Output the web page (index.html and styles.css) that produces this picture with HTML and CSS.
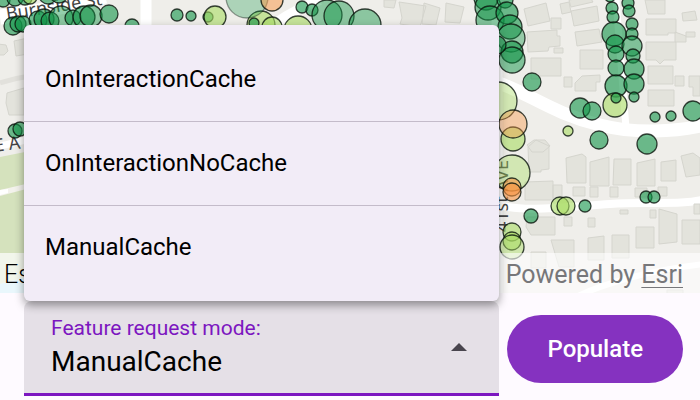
FILE: index.html
```html
<!DOCTYPE html>
<html lang="en">
<head>
<meta charset="utf-8">
<title>Tree map</title>
<link rel="stylesheet" href="styles.css">
</head>
<body>
<main class="app">
  <section class="map" aria-label="Street tree map">
    <svg class="map-canvas" viewBox="0 0 700 293" preserveAspectRatio="xMinYMin slice" aria-hidden="true">
      <rect width="700" height="293" fill="#efeeea"/>
      <!-- parks and water -->
      <path d="M0 157L30 151V253H0z" fill="#d5e2bd"/>
      <path d="M0 190L30 183V188L0 196z" fill="#f3f2ec"/>
      <path d="M0 190L8 189V193L0 195z" fill="#fff"/>
      <path d="M0 253H30V276L0 284z" fill="#dfe8cc"/>
      <path d="M0 284L30 276V293H0z" fill="#c8ebf8"/>
      <!-- roads -->
      <g fill="none" stroke="#fff">
        <path d="M0 17C30 13 70 6 105 -4" stroke-width="15"/>
        <path d="M146 0V30M497 20V293" stroke-width="11"/>
        <path d="M616 0L626 128" stroke-width="7"/>
        <path d="M490 80C525 90 550 113 600 125C635 134 675 132 705 125" stroke-width="13"/>
        <path d="M496 204C520 213 565 207 610 204C650 201 680 206 705 199" stroke-width="8"/>
        <path d="M570 300C600 284 650 270 705 264" stroke-width="6"/>
        <path d="M270 28Q285 14 320 0" stroke-width="10"/>
        <path d="M0 146L30 139" stroke-width="7"/>
      </g>
      <path d="M0 83Q15 78 30 76" fill="none" stroke="#e2e1dc" stroke-width="5"/>
      <!-- buildings -->
      <g fill="#e3e3dc" stroke="#d5d5ce">
        <path d="M-2 44l8 1 2 6-4 4H-2zM14 41l14-3v16l-12 2zM7 93l17-5v27H9l-3-12z"/>
        <path d="M384 0l12 0-2 8-10-1zM399 2l27 4-6 21-20-3 2-6zM424 3l16 5-4 17-14-1zM446 3l18 4-4 16-15-1z"/>
        <path d="M524 9l22-6 4 18-22 5zM560 4l9-2 2 10-9 2zM569 0l21-3 3 5-22 5zM571 11l26-5 2 15-25 5zM551 18h10v11h-10zM527 32l30-2v6h3v10l-11 1-1 4-20 1zM554 48h9v5h-9zM575 32l24-3 3 13-25 4zM580 50h23v19h-23zM531 58h30v18h-21v3h-9zM564 77h8v10h-8zM575 83l7-7 18-1v7h-4v9h-21zM645 0h20v14h-17zM682 13l13-2 2 9-14 1zM646 19h30v14h-8v2h-22zM675 32l11 4v6h-11zM686 32h9v5h-9zM646 42h30v18h-12l-4 4-4-4h-10zM648 66h25v18h-25zM675 76h9v10h-9zM689 76h11v20h-7v-9h-4zM648 90h26v16h-26z"/>
        <path d="M527 145l7-5h11l5 6-7 6h-11zM528 147l8-7 13 6v23l-8 1v2h-12zM566 158l16-4 4 3v26h-19zM590 162l19-5v29h-19zM614 159h17v26h-18zM637 163l18-4v27h-18zM661 162l15-2v21h-15zM681 156l12-3 7 5v17l-14 2zM525 182l28-1v19h-28zM553 185h9v13h-9zM573 187h12v9h-12zM590 187h8v10h-8zM610 187h8v10h-8zM635 188h12v9h-12zM658 187h9v9h-9zM527 217h28v18h-24l-5-8zM564 217h8v9h-8zM588 218h7v9h-7zM620 210h8v4h-8zM650 210h6v8h-6zM694 204h6v10h-6zM659 209l18 5v28l-18 2zM636 227h18v21h-18zM682 220h18v24h-18zM612 235h17v23h-17zM588 238l16-2v24h-16zM551 240h23v27h-15zM531 252h15v16h-15zM667 290h16v5h-16z"/>
      </g>
      <!-- street names -->
      <g class="street">
        <text transform="translate(7 20) rotate(-9)">Burnside St</text>
        <text transform="translate(-5 152) rotate(-8)">E A</text>
        <text transform="translate(508 232) rotate(-90)">41st AVE</text>
      </g>
      <!-- trees -->
      <g stroke="#0a140c" stroke-opacity=".8" stroke-width="1.3" fill="#119447" fill-opacity=".6">
        <g>
          <circle cx="13" cy="26" r="9"/><circle cx="18" cy="24" r="8"/><circle cx="23" cy="24" r="8"/><circle cx="3" cy="0" r="7"/><circle cx="15" cy="-2" r="8"/><circle cx="25" cy="-2" r="7"/><circle cx="38" cy="20" r="9"/><circle cx="44" cy="19" r="10"/><circle cx="50" cy="21" r="9"/><circle cx="61" cy="18" r="12" fill-opacity=".45"/><circle cx="73" cy="18" r="8"/><circle cx="84" cy="17" r="11"/><circle cx="91" cy="16" r="11" fill-opacity=".45"/><circle cx="109" cy="14" r="9"/><circle cx="132" cy="26" r="7"/><circle cx="48" cy="-5" r="9"/><circle cx="59" cy="-6" r="9"/>
          <circle cx="177" cy="15" r="6"/><circle cx="191" cy="16" r="5"/><circle cx="208" cy="17" r="5"/><circle cx="302" cy="7" r="6"/><circle cx="312" cy="10" r="6"/><circle cx="327" cy="15" r="15" fill-opacity=".45"/><circle cx="339" cy="16" r="15" fill-opacity=".45"/><circle cx="365" cy="25" r="16" fill-opacity=".45"/>
          <circle cx="15" cy="131" r="7"/><circle cx="20" cy="129" r="7"/>
        </g>
        <g>
          <circle cx="486" cy="-2" r="12"/><circle cx="488" cy="7" r="13" fill-opacity=".5"/><circle cx="490" cy="20" r="14" fill-opacity=".5"/><circle cx="505" cy="0" r="8"/><circle cx="507" cy="13" r="11"/><circle cx="510" cy="27" r="12"/><circle cx="511" cy="38" r="14" fill-opacity=".4"/><circle cx="512" cy="52" r="11"/><circle cx="512" cy="60" r="13" fill-opacity=".5"/><circle cx="497" cy="45" r="9"/><circle cx="532" cy="82" r="9"/>
          <circle cx="610" cy="-3" r="5"/><circle cx="612" cy="8" r="6"/><circle cx="613" cy="17" r="6"/><circle cx="628" cy="3" r="6"/><circle cx="629" cy="11" r="6"/><circle cx="632" cy="24" r="6"/><circle cx="632" cy="34" r="6"/><circle cx="614" cy="34" r="12"/><circle cx="615" cy="44" r="9"/><circle cx="632" cy="46" r="10" fill-opacity=".5"/><circle cx="616" cy="54" r="8"/><circle cx="633" cy="56" r="7"/><circle cx="616" cy="68" r="8"/><circle cx="634" cy="69" r="10"/><circle cx="616" cy="86" r="11"/><circle cx="634" cy="84" r="10"/><circle cx="634" cy="97" r="5"/>
          <circle cx="580" cy="108" r="10"/><circle cx="592" cy="111" r="9"/><circle cx="599" cy="140" r="9"/><circle cx="647" cy="144" r="10"/><circle cx="655" cy="117" r="5"/><circle cx="671" cy="116" r="5"/><circle cx="693" cy="111" r="10"/><circle cx="531" cy="216" r="7"/><circle cx="585" cy="206" r="6"/><circle cx="646" cy="197" r="6"/><circle cx="654" cy="197" r="6"/>
        </g>
        <g fill="#a8dc62">
          <circle cx="30" cy="-3" r="7"/><circle cx="215" cy="17" r="11"/><circle cx="261" cy="25" r="14"/><circle cx="272" cy="27" r="10"/><circle cx="298" cy="30" r="14"/><circle cx="498" cy="101" r="19" fill-opacity=".4"/><circle cx="513" cy="139" r="12"/><circle cx="512" cy="173" r="18" fill-opacity=".4"/><circle cx="615" cy="105" r="12"/><circle cx="568" cy="131" r="5"/><circle cx="560" cy="206" r="9"/><circle cx="566" cy="206" r="9"/><circle cx="512" cy="232" r="9"/><circle cx="512" cy="241" r="9"/><circle cx="512" cy="247" r="12" fill-opacity=".45"/>
        </g>
        <circle cx="247" cy="-3" r="21" fill-opacity=".3" stroke-opacity=".4"/><circle cx="254" cy="23" r="5"/><circle cx="616" cy="98" r="5"/>
        <g fill="#f99340"><circle cx="272" cy="0" r="11" fill-opacity=".5"/><circle cx="513" cy="124" r="14" fill-opacity=".4"/><circle cx="512" cy="187" r="9"/><circle cx="512" cy="192" r="9"/></g>
      </g>
    </svg>
    <p class="attribution"><span class="source">Esri Community Maps</span><span class="credit">Powered by <a href="#">Esri</a></span></p>
  </section>
  <section class="toolbar">
    <div class="field">
      <button class="select" type="button" aria-haspopup="listbox" aria-expanded="true" aria-controls="modes" aria-labelledby="mode-label mode-value">
        <span class="field-text"><span class="label" id="mode-label">Feature request mode:</span><span class="value" id="mode-value">ManualCache</span></span>
        <svg class="arrow" viewBox="0 0 16 8" aria-hidden="true"><path d="M0 8L8 0L16 8z"/></svg>
      </button>
      <div class="menu" id="modes" role="listbox" aria-labelledby="mode-label">
        <button class="option" type="button" role="option">OnInteractionCache</button>
        <button class="option" type="button" role="option">OnInteractionNoCache</button>
        <button class="option" type="button" role="option" aria-selected="true">ManualCache</button>
      </div>
    </div>
    <button class="populate" type="button">Populate</button>
  </section>
</main>
</body>
</html>
```
FILE: styles.css
```css
* {
  box-sizing: border-box;
}

body {
  margin: 0;
  background: #fefaff;
  font-family: Roboto, "Liberation Sans", sans-serif;
  color: #000;
}

button {
  border: 0;
  font: inherit;
  color: inherit;
}

.app {
  display: flex;
  flex-direction: column;
  min-height: 100vh;
}

.map {
  position: relative;
  display: flex;
  flex: 1;
  flex-direction: column;
  justify-content: flex-end;
  overflow: hidden;
}

.map-canvas {
  position: absolute;
  inset: 0;
  width: 100%;
  height: 100%;
}

.street {
  font-family: "Noto Sans", sans-serif;
  font-size: 18px;
  fill: #444;
}

.attribution {
  position: relative;
  display: flex;
  justify-content: space-between;
  margin: 0;
  padding: 4px 17px 0 4px;
  background: rgb(255 255 255 / 60%);
  font-size: 25px;
  line-height: 36px;
}

.source {
  font-weight: 300;
}

.credit {
  color: #77777a;
}

.credit a {
  color: inherit;
  text-decoration-thickness: 1px;
  text-underline-offset: 4px;
}

.toolbar {
  display: flex;
  align-items: center;
  gap: 8px;
  padding: 8px 17px 4px 24px;
}

.field {
  position: relative;
  flex: 1;
}

.select {
  display: flex;
  align-items: center;
  justify-content: space-between;
  width: 100%;
  padding: 12px 32px 12px 27px;
  border-bottom: 3px solid #7c16c0;
  border-radius: 8px 8px 0 0;
  background: #e5e0e7;
  text-align: left;
}

.field-text {
  display: flex;
  flex-direction: column;
}

.label {
  font-size: 21px;
  line-height: 30px;
  color: #7c16c0;
}

.value {
  font-size: 28px;
  line-height: 38px;
}

.arrow {
  width: 16px;
  height: 8px;
  fill: #49454e;
}

.menu {
  position: absolute;
  bottom: 100%;
  left: 0;
  display: grid;
  width: 100%;
  padding: 13px 0 12px;
  overflow: hidden;
  border-radius: 6px;
  background: #f2ecf7;
  box-shadow: 0 4px 10px rgb(0 0 0 / 40%);
}

.option {
  padding: 0 21px;
  background: transparent;
  font-size: 24px;
  line-height: 83px;
  text-align: left;
}

.option + .option {
  border-top: 1px solid #c4bbca;
}

.populate {
  padding: 0 40px;
  border-radius: 34px;
  background: #8532c0;
  color: #fff;
  font-size: 24px;
  font-weight: 500;
  line-height: 68px;
}
```
